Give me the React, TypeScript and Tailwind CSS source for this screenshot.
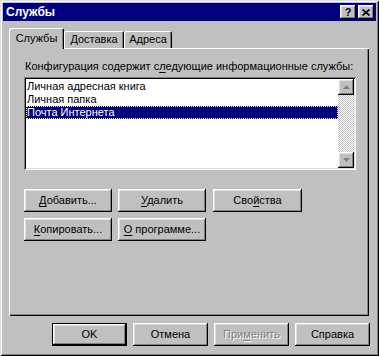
import React from "react";

const raised =
  "bg-[#c0c0c0] shadow-[inset_-1px_-1px_0_#000,inset_1px_1px_0_#fff,inset_-2px_-2px_0_#808080,inset_2px_2px_0_#dfdfdf]";
const sunken =
  "shadow-[inset_1px_1px_0_#808080,inset_-1px_-1px_0_#fff,inset_2px_2px_0_#000,inset_-2px_-2px_0_#dfdfdf]";

const Btn = ({
  children,
  className = "",
  isDefault = false,
  disabled = false,
}: {
  children: React.ReactNode;
  className?: string;
  isDefault?: boolean;
  disabled?: boolean;
}) => (
  <div
    className={`${isDefault ? "border border-black" : ""} ${className} h-[23px]`}
  >
    <div
      className={`${raised} w-full h-full flex items-center justify-center ${
        disabled ? "text-[#808080] [text-shadow:1px_1px_0_#fff]" : "text-black"
      }`}
    >
      {children}
    </div>
  </div>
);

const U = ({ children }: { children: React.ReactNode }) => (
  <span className="underline underline-offset-2">{children}</span>
);

const ScrollArrow = ({ down = false }: { down?: boolean }) => (
  <div className={`${raised} w-[16px] h-[16px] flex items-center justify-center`}>
    <svg width="7" height="4" viewBox="0 0 7 4">
      {down ? (
        <polygon points="0,0 7,0 3.5,4" fill="#808080" />
      ) : (
        <polygon points="3.5,0 7,4 0,4" fill="#808080" />
      )}
    </svg>
  </div>
);

export default function App() {
  const items = ["Личная адресная книга", "Личная папка", "Почта Интернета"];

  return (
    <div
      className="w-[379px] h-[356px] bg-[#c0c0c0] p-[3px] flex flex-col text-[11px] leading-none text-black shadow-[inset_1px_1px_0_#dfdfdf,inset_-1px_-1px_0_#000,inset_2px_2px_0_#fff,inset_-2px_-2px_0_#808080]"
      style={{ fontFamily: '"Liberation Sans", Arial, sans-serif' }}
    >
      {/* title bar */}
      <div className="h-[18px] bg-[#000080] flex items-center justify-between pl-[3px] pr-[2px]">
        <span className="text-white font-bold text-[12px]">Службы</span>
        <div className="flex gap-[2px]">
          <div className={`${raised} w-[16px] h-[14px] flex items-center justify-center font-bold text-[11px]`}>
            ?
          </div>
          <div className={`${raised} w-[16px] h-[14px] flex items-center justify-center`}>
            <svg width="8" height="7" viewBox="0 0 8 7">
              <path d="M0.5 0.5 L7.5 6.5 M7.5 0.5 L0.5 6.5" stroke="#000" strokeWidth="1.6" />
            </svg>
          </div>
        </div>
      </div>

      {/* tabs */}
      <div className="mt-[7px] ml-[6px] mr-[7px] flex flex-col">
        <div className="flex items-end h-[20px] relative z-10">
          <div className="h-[21px] w-[55px] bg-[#c0c0c0] flex items-center justify-center shadow-[inset_1px_1px_0_#fff,inset_-1px_0_0_#000,inset_-2px_0_0_#808080] rounded-t-[2px] -mb-[1px]">
            Службы
          </div>
          <div className="h-[17px] w-[60px] flex items-center justify-center shadow-[inset_1px_1px_0_#fff,inset_-1px_0_0_#000,inset_-2px_0_0_#808080] rounded-t-[2px]">
            Доставка
          </div>
          <div className="h-[17px] w-[48px] flex items-center justify-center shadow-[inset_1px_1px_0_#fff,inset_-1px_0_0_#000,inset_-2px_0_0_#808080] rounded-t-[2px]">
            Адреса
          </div>
        </div>

        {/* panel */}
        <div className="h-[268px] px-[15px] pt-[13px] flex flex-col shadow-[inset_1px_1px_0_#fff,inset_-1px_-1px_0_#000,inset_-2px_-2px_0_#808080]">
          <div className="h-[12px] pl-[1px]">
            Конфигурация содержит с<U>л</U>едующие информационные службы:
          </div>
          <div className={`mt-[4px] h-[93px] w-[332px] bg-white p-[2px] flex ${sunken}`}>
            <div className="flex-1 flex flex-col pt-[1px]">
              {items.map((it, i) => (
                <div
                  key={it}
                  className={`h-[13px] flex items-center pl-[1px] ${
                    i === 2
                      ? "bg-[#000080] text-white outline-1 outline-dotted outline-[#ffff80] -outline-offset-1"
                      : ""
                  }`}
                >
                  {it}
                </div>
              ))}
            </div>
            <div className="w-[16px] flex flex-col justify-between bg-[repeating-conic-gradient(#c0c0c0_0_25%,#fff_0_50%)] bg-[length:2px_2px]">
              <ScrollArrow />
              <ScrollArrow down />
            </div>
          </div>

          <div className="mt-[19px] flex gap-[6px]">
            <Btn className="w-[88px]">
              <span><U>Д</U>обавить...</span>
            </Btn>
            <Btn className="w-[88px]">
              <span><U>У</U>далить</span>
            </Btn>
            <Btn className="w-[89px] ml-[1px]">
              <span>Сво<U>й</U>ства</span>
            </Btn>
          </div>
          <div className="mt-[6px] flex gap-[6px]">
            <Btn className="w-[88px]">
              <span><U>К</U>опировать...</span>
            </Btn>
            <Btn className="w-[88px]">
              <span><U>О</U> программе...</span>
            </Btn>
          </div>
        </div>
      </div>

      {/* bottom buttons */}
      <div className="mt-[7px] flex gap-[6px] pl-[49px]">
        <Btn className="w-[75px]" isDefault>
          OK
        </Btn>
        <Btn className="w-[75px]">Отмена</Btn>
        <Btn className="w-[75px]" disabled>
          <span>При<U>м</U>енить</span>
        </Btn>
        <Btn className="w-[75px]">Справка</Btn>
      </div>
    </div>
  );
}
